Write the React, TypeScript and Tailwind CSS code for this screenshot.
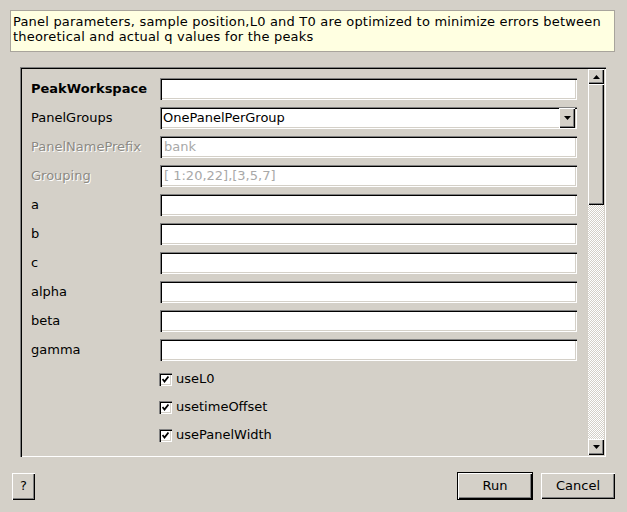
const sunken =
  "shadow-[inset_1px_1px_0_#808080,inset_2px_2px_0_#000000,inset_-1px_-1px_0_#ffffff,inset_-2px_-2px_0_#d4d0c8]";
const raised =
  "shadow-[inset_1px_1px_0_#ffffff,inset_-1px_-1px_0_#000000,inset_-2px_-2px_0_#808080]";

function Arrow({ dir }: { dir: "up" | "down" }) {
  return (
    <svg width="7" height="4" viewBox="0 0 7 4">
      {dir === "up" ? <path d="M3.5 0 L7 4 L0 4 Z" fill="#000" /> : <path d="M0 0 L7 0 L3.5 4 Z" fill="#000" />}
    </svg>
  );
}

function TextRow({ label, value, bold, disabled }: { label: string; value?: string; bold?: boolean; disabled?: boolean }) {
  return (
    <div className="flex items-center h-[22px]">
      <div
        className={`w-[138px] pl-[9px] whitespace-nowrap ${bold ? "font-bold" : ""} ${
          disabled ? "text-[#8c8a84] [text-shadow:1px_1px_0_#ffffff]" : "text-black"
        }`}
      >
        {label}
      </div>
      <div className={`w-[417px] h-[22px] bg-white ${sunken} flex items-center pl-[4px] ${disabled ? "text-[#a8a8a8]" : ""}`}>
        {value}
      </div>
    </div>
  );
}

function CheckRow({ label }: { label: string }) {
  return (
    <div className="flex items-center h-[22px] pl-[137px]">
      <div className={`w-[13px] h-[13px] bg-white ${sunken} flex items-center justify-center`}>
        <svg width="7" height="7" viewBox="0 0 7 7">
          <path d="M0.5 3 L2.5 5.5 L6.5 0.5" stroke="#000" strokeWidth="1.8" fill="none" />
        </svg>
      </div>
      <span className="ml-[4px]">{label}</span>
    </div>
  );
}

export default function App() {
  return (
    <div className="w-[627px] h-[512px] bg-[#d4d0c8] text-[13px] text-black font-['DejaVu_Sans',sans-serif] relative overflow-hidden">
      <div className="ml-[10px] mt-[10px] w-[605px] h-[42px] bg-[#ffffe1] border border-[#a8a49c] px-[2px] pt-[3px] tracking-[0.2px] leading-[15px] whitespace-nowrap">
        Panel parameters, sample position,L0 and T0 are optimized to minimize errors between
        <br />
        theoretical and actual q values for the peaks
      </div>

      <div className={`ml-[20px] mt-[15px] w-[586px] h-[390px] ${sunken} flex p-[2px]`}>
        <div className="flex-1 pt-[9px] flex flex-col">
          <div className="flex flex-col gap-[7px]">
            <TextRow label="PeakWorkspace" bold />
            <div className="flex items-center h-[22px]">
              <div className="w-[138px] pl-[9px]">PanelGroups</div>
              <div className={`w-[417px] h-[22px] bg-white ${sunken} flex items-center pl-[3px] pr-[2px]`}>
                <span className="flex-1">OnePanelPerGroup</span>
                <div className={`w-[16px] h-[20px] bg-[#d4d0c8] ${raised} flex items-center justify-center`}>
                  <Arrow dir="down" />
                </div>
              </div>
            </div>
            <TextRow label="PanelNamePrefix" value="bank" disabled />
            <TextRow label="Grouping" value="[ 1:20,22],[3,5,7]" disabled />
            <TextRow label="a" />
            <TextRow label="b" />
            <TextRow label="c" />
            <TextRow label="alpha" />
            <TextRow label="beta" />
            <TextRow label="gamma" />
          </div>
          <div className="flex flex-col gap-[6px] mt-[7px]">
            <CheckRow label="useL0" />
            <CheckRow label="usetimeOffset" />
            <CheckRow label="usePanelWidth" />
          </div>
        </div>
        <div className="w-[16px] flex flex-col">
          <div className={`h-[15px] bg-[#d4d0c8] ${raised} flex items-center justify-center`}>
            <Arrow dir="up" />
          </div>
          <div className={`h-[121px] bg-[#d4d0c8] ${raised}`} />
          <div className="flex-1 bg-[repeating-conic-gradient(#ffffff_0%_25%,#d4d0c8_0%_50%)] bg-[length:2px_2px]" />
          <div className={`h-[16px] bg-[#d4d0c8] ${raised} flex items-center justify-center`}>
            <Arrow dir="down" />
          </div>
        </div>
      </div>

      <div className="flex items-center mt-[15px] px-[12px]">
        <button className={`w-[23px] h-[27px] bg-[#d4d0c8] ${raised} flex items-center justify-center`}>?</button>
        <div className="flex-1" />
        <button className="w-[76px] h-[28px] border border-black bg-[#d4d0c8]">
          <div className={`w-full h-full ${raised} flex items-center justify-center`}>Run</div>
        </button>
        <button className={`ml-[8px] w-[74px] h-[26px] bg-[#d4d0c8] ${raised} flex items-center justify-center`}>
          Cancel
        </button>
      </div>
    </div>
  );
}
